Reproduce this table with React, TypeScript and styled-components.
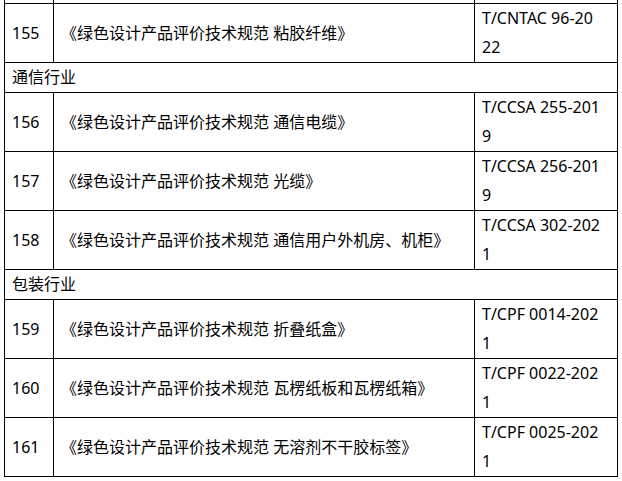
import React from 'react';
import styled, { createGlobalStyle } from 'styled-components';

type Row =
  | { kind: 'group'; title: string }
  | { kind: 'item'; no: number; name: string; code: string[] };

const ROWS: Row[] = [
  { kind: 'item', no: 155, name: '《绿色设计产品评价技术规范 粘胶纤维》', code: ['T/CNTAC 96-20', '22'] },
  { kind: 'group', title: '通信行业' },
  { kind: 'item', no: 156, name: '《绿色设计产品评价技术规范 通信电缆》', code: ['T/CCSA 255-201', '9'] },
  { kind: 'item', no: 157, name: '《绿色设计产品评价技术规范 光缆》', code: ['T/CCSA 256-201', '9'] },
  { kind: 'item', no: 158, name: '《绿色设计产品评价技术规范 通信用户外机房、机柜》', code: ['T/CCSA 302-202', '1'] },
  { kind: 'group', title: '包装行业' },
  { kind: 'item', no: 159, name: '《绿色设计产品评价技术规范 折叠纸盒》', code: ['T/CPF 0014-202', '1'] },
  { kind: 'item', no: 160, name: '《绿色设计产品评价技术规范 瓦楞纸板和瓦楞纸箱》', code: ['T/CPF 0022-202', '1'] },
  { kind: 'item', no: 161, name: '《绿色设计产品评价技术规范 无溶剂不干胶标签》', code: ['T/CPF 0025-202', '1'] },
];

export default function App() {
  return (
    <>
      <GlobalStyle />
      <Page>
        <Table>
          <colgroup>
            <col style={{ width: 49 }} />
            <col style={{ width: 421 }} />
            <col style={{ width: 143 }} />
          </colgroup>
          <tbody>
            {/* 위로 스크롤되어 잘린 이전 행 */}
            <CutRow>
              <td />
              <td />
              <td />
            </CutRow>
            {ROWS.map((row, i) =>
              row.kind === 'group' ? (
                <tr key={i}>
                  <GroupCell colSpan={3}>{row.title}</GroupCell>
                </tr>
              ) : (
                <tr key={i}>
                  <Cell>{row.no}</Cell>
                  <Cell>{row.name}</Cell>
                  <CodeCell>
                    {row.code.map(line => (
                      <span key={line}>{line}</span>
                    ))}
                  </CodeCell>
                </tr>
              )
            )}
          </tbody>
        </Table>
      </Page>
    </>
  );
}

const GlobalStyle = createGlobalStyle`
  html, body {
    margin: 0;
    background: #fff;
  }
`;

const Page = styled.div`
  padding: 0 4px;
  font-family: 'Noto Sans', 'Noto Sans CJK SC', sans-serif;
  font-size: 16px;
  color: #000;
`;

const Table = styled.table`
  width: 614px;
  table-layout: fixed;
  border-collapse: collapse;
  border-top: none;

  td {
    border: 1px solid #000;
    padding: 0 7px;
    line-height: 29px;
    vertical-align: middle;
  }
`;

/** 잘린 윗 행 */
const CutRow = styled.tr`
  td {
    border-top: none;
    height: 3px;
    padding: 0;
    line-height: 0;
  }
`;

const Cell = styled.td`
  white-space: nowrap;
`;

const CodeCell = styled.td`
  span {
    display: block;
  }
`;

/** 업종 구분 행 */
const GroupCell = styled.td`
  padding-left: 8px;
`;
